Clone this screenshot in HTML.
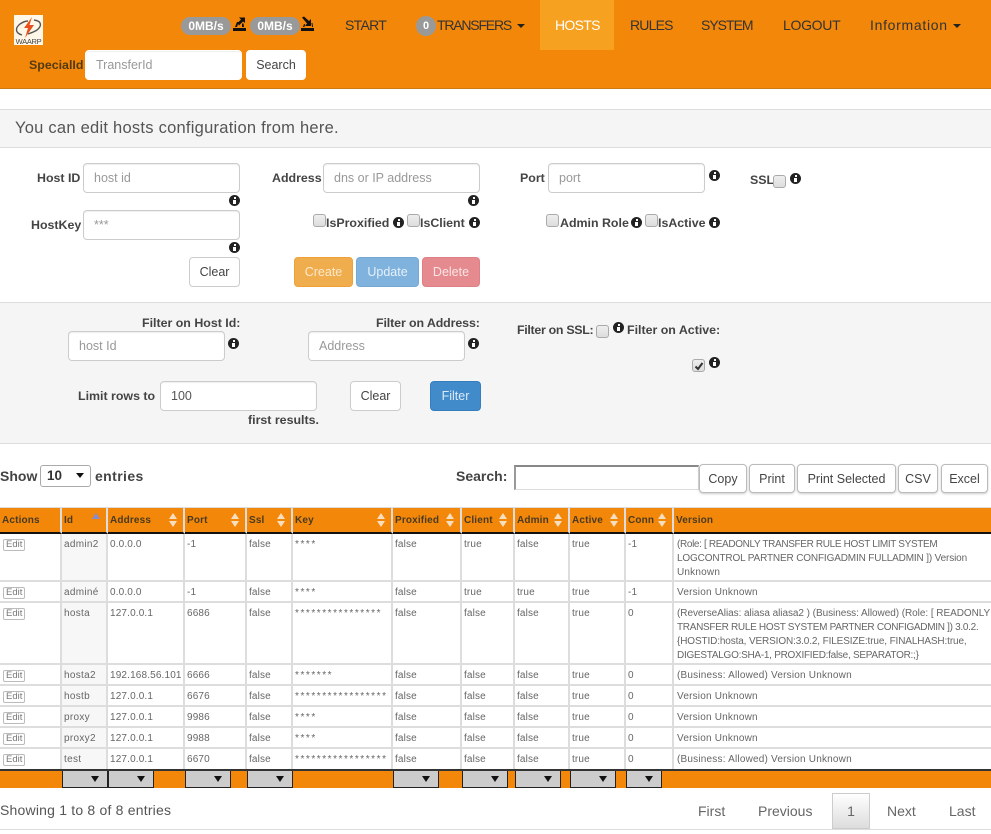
<!DOCTYPE html>
<html><head><meta charset="utf-8"><title>Hosts</title>
<style>
html,body{margin:0;padding:0;background:#fff}
body{width:991px;height:834px;position:relative;overflow:hidden;font-family:"Liberation Sans",sans-serif;color:#555;font-size:14px}
.a,.l,.b,.i,.inp,.c{position:absolute;white-space:nowrap}
.nav{font-size:14px;color:#333;line-height:20px;top:15px}
.l{font-weight:700;font-size:12.4px;line-height:18px;color:#444}
.inp{box-sizing:border-box;height:30px;background:#fff;border:1px solid #ccc;border-radius:4px;padding-left:10px;line-height:28px;font-size:12.5px;color:#999;box-shadow:inset 0 1px 1px rgba(0,0,0,.07)}
.b{box-sizing:border-box;height:30px;line-height:28px;text-align:center;font-size:12.5px;border:1px solid #ccc;border-radius:4px;background:#fff;color:#444}
.i{width:11px;height:11px;border-radius:50%;background:#222}
.i:before{content:"";position:absolute;left:4.5px;top:2px;width:2px;height:2px;background:#fff}
.i:after{content:"";position:absolute;left:4px;top:5px;width:3px;height:4px;background:#fff}
.c{box-sizing:border-box;width:13px;height:13px;border:1px solid #aaa;border-radius:3px;background:linear-gradient(#eee,#ddd)}
.pill{background:#999;color:#fff;font-weight:700;font-size:12px;border-radius:10px;height:18px;line-height:18px;text-align:center;top:17px}
table{position:absolute;left:0;top:508px;width:991px;table-layout:fixed;border-collapse:separate;border-spacing:0;font-size:10px;letter-spacing:.15px;color:#666}
th{background:#f2870a;color:#4a3a20;font-size:10px;font-weight:700;text-align:left;height:24px;padding:0 0 0 2px;border-right:2px solid #ddd;border-bottom:2px solid #111;border-top:0;box-sizing:border-box;position:relative}
td{padding:4px 0 0 2px;vertical-align:top;border-right:2px solid #ddd;border-bottom:2px solid #ddd;box-sizing:border-box;line-height:14px;overflow:hidden;white-space:nowrap}
td.w{letter-spacing:.3px}
td.k{letter-spacing:1.55px;padding-left:2px}
td.v{border-right:0;padding-left:3px;letter-spacing:.2px}
tr.f td{background:#f2870a;border-right:0;border-bottom:0;padding:0;border-top:2px solid #333;height:19px;position:relative}
td.s{background:#f7f7f7}
.e{display:inline-block;border:1px solid #bbb;border-radius:2px;font-size:9.5px;line-height:10px;padding:0 2px;color:#777;background:#fff;margin-left:1px;letter-spacing:0}
th i{position:absolute;right:6px;width:0;height:0;border-left:4px solid transparent;border-right:4px solid transparent}
th i.u{top:5px;border-bottom:6px solid #f5dfc0}
th i.d{top:13px;border-top:6px solid #f5dfc0}
.sel{display:block;box-sizing:border-box;width:46px;height:17px;background:#ccc;border:1px solid #222;border-top:0;position:relative}
.sel:after{content:"";position:absolute;right:8px;top:5px;border-left:4px solid transparent;border-right:4px solid transparent;border-top:6px solid #111}
</style></head><body>

<!-- header -->
<div class="a" style="left:0;top:0;width:991px;height:89px;background:#f2870a;border-bottom:1px solid #cc7a12;box-sizing:border-box"></div>
<svg class="a" style="left:14px;top:15px" width="29" height="30" viewBox="0 0 29 30"><rect width="29" height="30" fill="#fff8e8"/><path d="M8 20 C1 18 1 13 6 9 C9 7 12 6 14 6" fill="none" stroke="#555" stroke-width="1.4"/><path d="M20 5 C28 6 28 11 23 15 C20 17 17 18 14 19" fill="none" stroke="#555" stroke-width="1.4"/><path d="M18 2 L10 13 L14 13 L11 23 L20 10 L15.5 10 Z" fill="#e8501e"/><text x="14.5" y="29" font-family="Liberation Sans,sans-serif" font-size="7.5" fill="#444" text-anchor="middle" letter-spacing="-.3">WAARP</text></svg>

<div class="a pill" style="left:181px;width:50px">0MB/s</div>
<svg class="a" style="left:233px;top:16px" width="13" height="16" viewBox="0 0 13 16"><path d="M0 12h13v3H0z" fill="#111"/><path d="M2 11 L4 6 H5.5 L8 3.5 L6 1.5 H12 V7 L10 5.5 L6 9.5 L5 8 L4 11 H9 L9 7.5 L10.5 7.5 L11 11 Z" fill="#111"/></svg>
<div class="a pill" style="left:250px;width:50px">0MB/s</div>
<svg class="a" style="left:301px;top:16px" width="13" height="16" viewBox="0 0 13 16"><path d="M0 12h13v3H0z" fill="#111"/><path d="M1 1.5 L3 0.5 L8 5 L10 3 V10 H4 L6 7.5 Z M2 11 L3 8 H4 L3.5 11 Z M11 11 L10.5 7 H11.5 L12 11 Z" fill="#111"/></svg>

<div class="a" style="left:540px;top:0;width:74px;height:50px;background:#f6a120"></div>
<div class="a nav" style="left:345px;letter-spacing:-.7px">START</div>
<div class="a pill" style="left:416px;width:20px;height:20px;line-height:20px;top:16px;border-radius:50%;font-size:11px">0</div>
<div class="a nav" style="left:437px;letter-spacing:-1.2px">TRANSFERS</div>
<div class="a" style="left:517px;top:24px;border-left:4px solid transparent;border-right:4px solid transparent;border-top:4px solid #222"></div>
<div class="a nav" style="left:555px;color:#fff;letter-spacing:-.7px">HOSTS</div>
<div class="a nav" style="left:630px;letter-spacing:-.8px">RULES</div>
<div class="a nav" style="left:701px;letter-spacing:-1px">SYSTEM</div>
<div class="a nav" style="left:783px;letter-spacing:-.3px">LOGOUT</div>
<div class="a nav" style="left:870px;letter-spacing:.7px">Information</div>
<div class="a" style="left:953px;top:24px;border-left:4px solid transparent;border-right:4px solid transparent;border-top:4px solid #222"></div>

<div class="l" style="left:29px;top:56px;color:#553a10">SpecialId</div>
<div class="inp" style="left:85px;top:50px;width:157px;border-color:#fff">TransferId</div>
<div class="b" style="left:246px;top:50px;width:60px;border-color:#fff">Search</div>

<!-- panel title -->
<div class="a" style="left:0;top:109px;width:991px;height:39px;background:#f5f5f5;border-top:1px solid #ddd;border-bottom:1px solid #ddd;box-sizing:border-box"></div>
<div class="a" style="left:15px;top:118px;font-size:16.5px;line-height:20px;color:#555;letter-spacing:.25px">You can edit hosts configuration from here.</div>

<!-- form -->
<div class="l" style="left:37px;top:169px">Host ID</div>
<div class="inp" style="left:83px;top:163px;width:157px">host id</div>
<div class="i" style="left:229px;top:195px"></div>
<div class="l" style="left:31px;top:216px">HostKey</div>
<div class="inp" style="left:83px;top:210px;width:157px">***</div>
<div class="i" style="left:229px;top:242px"></div>
<div class="b" style="left:189px;top:257px;width:51px">Clear</div>

<div class="l" style="left:272px;top:169px">Address</div>
<div class="inp" style="left:323px;top:163px;width:157px">dns or IP address</div>
<div class="i" style="left:468px;top:195px"></div>
<div class="c" style="left:313px;top:214px"></div>
<div class="l" style="left:326px;top:214px">IsProxified</div>
<div class="i" style="left:393px;top:217px"></div>
<div class="c" style="left:407px;top:214px"></div>
<div class="l" style="left:420px;top:214px">IsClient</div>
<div class="i" style="left:469px;top:217px"></div>
<div class="b" style="left:294px;top:257px;width:59px;background:#f0ad4e;border-color:#eea236;color:#fce9cc">Create</div>
<div class="b" style="left:356px;top:257px;width:63px;background:#7fb3de;border-color:#74a9d6;color:#e6f0f9">Update</div>
<div class="b" style="left:422px;top:257px;width:58px;background:#e58a8e;border-color:#df8085;color:#fbe5e6">Delete</div>

<div class="l" style="left:520px;top:169px">Port</div>
<div class="inp" style="left:548px;top:163px;width:157px">port</div>
<div class="i" style="left:709px;top:170px"></div>
<div class="l" style="left:750px;top:171px">SSL</div>
<div class="c" style="left:773px;top:175px"></div>
<div class="i" style="left:790px;top:173px"></div>
<div class="c" style="left:546px;top:214px"></div>
<div class="l" style="left:560px;top:214px">Admin Role</div>
<div class="i" style="left:631px;top:217px"></div>
<div class="c" style="left:645px;top:214px"></div>
<div class="l" style="left:658px;top:214px">IsActive</div>
<div class="i" style="left:709px;top:217px"></div>

<!-- filter -->
<div class="a" style="left:0;top:302px;width:991px;height:142px;background:#f5f5f5;border-top:1px solid #ddd;border-bottom:1px solid #ddd;box-sizing:border-box"></div>
<div class="l" style="left:142px;top:314px">Filter on Host Id:</div>
<div class="inp" style="left:68px;top:331px;width:157px">host Id</div>
<div class="i" style="left:228px;top:338px"></div>
<div class="l" style="left:376px;top:314px;letter-spacing:-.1px">Filter on Address:</div>
<div class="inp" style="left:308px;top:331px;width:157px">Address</div>
<div class="i" style="left:468px;top:338px"></div>
<div class="l" style="left:517px;top:321px;letter-spacing:-.3px">Filter on SSL:</div>
<div class="c" style="left:596px;top:325px"></div>
<div class="i" style="left:613px;top:322px"></div>
<div class="l" style="left:627px;top:321px">Filter on Active:</div>
<div class="c" style="left:692px;top:359px"><svg style="position:absolute;left:1px;top:1px" width="10" height="10" viewBox="0 0 10 10"><path d="M1.5 5.5 L4 8 L8.5 2" fill="none" stroke="#333" stroke-width="2"/></svg></div>
<div class="i" style="left:709px;top:357px"></div>
<div class="l" style="left:78px;top:387px">Limit rows to</div>
<div class="inp" style="left:160px;top:381px;width:157px;color:#555">100</div>
<div class="l" style="left:248px;top:411px">first results.</div>
<div class="b" style="left:350px;top:381px;width:51px">Clear</div>
<div class="b" style="left:430px;top:381px;width:51px;background:#428bca;border-color:#357ebd;color:#dbe9f5">Filter</div>

<!-- controls -->
<div class="l" style="left:0;top:467px;font-size:14px">Show</div>
<div class="a" style="left:40px;top:465px;width:51px;height:22px;box-sizing:border-box;border:1px solid #aaa;border-radius:3px;background:#fff;font-weight:700;font-size:13.5px;line-height:20px;padding-left:6px;color:#333">10</div>
<div class="a" style="left:76px;top:473px;border-left:4px solid transparent;border-right:4px solid transparent;border-top:5px solid #111"></div>
<div class="l" style="left:95px;top:467px;font-size:14px;letter-spacing:.4px">entries</div>
<div class="l" style="left:456px;top:467px;font-size:14px">Search:</div>
<div class="a" style="left:514px;top:465px;width:185px;height:25px;box-sizing:border-box;border:1px solid #ddd;border-top:2px solid #888;border-left:2px solid #999;background:#fff"></div>
<div class="b" style="left:699px;top:464px;width:48px;height:29px;box-shadow:0 1px 2px rgba(0,0,0,.2);border-color:#bbb">Copy</div>
<div class="b" style="left:749px;top:464px;width:46px;height:29px;box-shadow:0 1px 2px rgba(0,0,0,.2);border-color:#bbb">Print</div>
<div class="b" style="left:797px;top:464px;width:99px;height:29px;box-shadow:0 1px 2px rgba(0,0,0,.2);border-color:#bbb">Print Selected</div>
<div class="b" style="left:898px;top:464px;width:40px;height:29px;box-shadow:0 1px 2px rgba(0,0,0,.2);border-color:#bbb">CSV</div>
<div class="b" style="left:941px;top:464px;width:47px;height:29px;box-shadow:0 1px 2px rgba(0,0,0,.2);border-color:#bbb">Excel</div>

<!-- table -->
<div class="a" style="left:0;top:507px;width:991px;height:1px;background:#ddd"></div>
<table>
<colgroup><col style="width:62px"><col style="width:46px"><col style="width:77px"><col style="width:62px"><col style="width:46px"><col style="width:100px"><col style="width:69px"><col style="width:53px"><col style="width:55px"><col style="width:56px"><col style="width:48px"><col></colgroup>
<tr style="height:26px">
<th>Actions</th><th>Id<i style="top:5px;border-bottom:6px solid #8a8ad0"></i></th><th>Address<i class="u"></i><i class="d"></i></th><th>Port<i class="u"></i><i class="d"></i></th><th>Ssl<i class="u"></i><i class="d"></i></th><th>Key<i class="u"></i><i class="d"></i></th><th>Proxified<i class="u"></i><i class="d"></i></th><th>Client<i class="u"></i><i class="d"></i></th><th>Admin<i class="u"></i><i class="d"></i></th><th>Active<i class="u"></i><i class="d"></i></th><th>Conn<i class="u"></i><i class="d"></i></th><th style="border-right:0">Version</th>
</tr>
<tr style="height:48px"><td><span class="e">Edit</span></td><td class="s w">admin2</td><td>0.0.0.0</td><td>-1</td><td>false</td><td class="k">****</td><td>false</td><td>true</td><td>false</td><td>true</td><td>-1</td><td class="v"><span style="letter-spacing:-.35px">(Role: [ READONLY TRANSFER RULE HOST LIMIT SYSTEM</span><br><span style="letter-spacing:-.15px">LOGCONTROL PARTNER CONFIGADMIN FULLADMIN ]) Version</span><br>Unknown</td></tr>
<tr style="height:21px"><td><span class="e">Edit</span></td><td class="s w">adminé</td><td>0.0.0.0</td><td>-1</td><td>false</td><td class="k">****</td><td>false</td><td>true</td><td>true</td><td>true</td><td>-1</td><td class="v">Version Unknown</td></tr>
<tr style="height:62px"><td><span class="e">Edit</span></td><td class="s w">hosta</td><td>127.0.0.1</td><td>6686</td><td>false</td><td class="k">****************</td><td>false</td><td>false</td><td>false</td><td>true</td><td>0</td><td class="v"><span style="letter-spacing:-.05px">(ReverseAlias: aliasa aliasa2 ) (Business: Allowed) (Role: [ READONLY</span><br><span style="letter-spacing:-.3px">TRANSFER RULE HOST SYSTEM PARTNER CONFIGADMIN ]) 3.0.2.</span><br><span style="letter-spacing:-.13px">{HOSTID:hosta, VERSION:3.0.2, FILESIZE:true, FINALHASH:true,</span><br><span style="letter-spacing:-.27px">DIGESTALGO:SHA-1, PROXIFIED:false, SEPARATOR:;}</span></td></tr>
<tr style="height:21px"><td><span class="e">Edit</span></td><td class="s w">hosta2</td><td>192.168.56.101</td><td>6666</td><td>false</td><td class="k">*******</td><td>false</td><td>false</td><td>false</td><td>true</td><td>0</td><td class="v">(Business: Allowed) Version Unknown</td></tr>
<tr style="height:21px"><td><span class="e">Edit</span></td><td class="s w">hostb</td><td>127.0.0.1</td><td>6676</td><td>false</td><td class="k">*****************</td><td>false</td><td>false</td><td>false</td><td>true</td><td>0</td><td class="v">Version Unknown</td></tr>
<tr style="height:21px"><td><span class="e">Edit</span></td><td class="s w">proxy</td><td>127.0.0.1</td><td>9986</td><td>false</td><td class="k">****</td><td>false</td><td>false</td><td>false</td><td>true</td><td>0</td><td class="v">Version Unknown</td></tr>
<tr style="height:21px"><td><span class="e">Edit</span></td><td class="s w">proxy2</td><td>127.0.0.1</td><td>9988</td><td>false</td><td class="k">****</td><td>false</td><td>false</td><td>false</td><td>true</td><td>0</td><td class="v">Version Unknown</td></tr>
<tr style="height:20px"><td style="border-bottom:0"><span class="e">Edit</span></td><td class="s w" style="border-bottom:0">test</td><td style="border-bottom:0">127.0.0.1</td><td style="border-bottom:0">6670</td><td style="border-bottom:0">false</td><td class="k" style="border-bottom:0">*****************</td><td style="border-bottom:0">false</td><td style="border-bottom:0">false</td><td style="border-bottom:0">false</td><td style="border-bottom:0">true</td><td style="border-bottom:0">0</td><td class="v" style="border-bottom:0">(Business: Allowed) Version Unknown</td></tr>
<tr class="f"><td></td><td><span class="sel"></span></td><td><span class="sel"></span></td><td><span class="sel"></span></td><td><span class="sel"></span></td><td></td><td><span class="sel"></span></td><td><span class="sel"></span></td><td><span class="sel"></span></td><td><span class="sel"></span></td><td><span class="sel" style="width:36px"></span></td><td></td></tr>
</table>

<!-- footer -->
<div class="a" style="left:0;top:801px;font-size:14px;line-height:18px;color:#555;letter-spacing:.2px">Showing 1 to 8 of 8 entries</div>
<div class="a" style="left:698px;top:802px;font-size:14px;line-height:18px;color:#666">First</div>
<div class="a" style="left:758px;top:802px;font-size:14px;line-height:18px;color:#666">Previous</div>
<div class="a" style="left:832px;top:793px;width:38px;height:36px;box-sizing:border-box;border:1px solid #ccc;background:linear-gradient(#fff,#ddd);text-align:center;line-height:34px;font-size:14px;color:#666">1</div>
<div class="a" style="left:887px;top:802px;font-size:14px;line-height:18px;color:#666">Next</div>
<div class="a" style="left:949px;top:802px;font-size:14px;line-height:18px;color:#666">Last</div>
<div class="a" style="left:0;top:829px;width:991px;height:5px;border-top:1px solid #ddd;box-sizing:border-box"></div>
</body></html>
